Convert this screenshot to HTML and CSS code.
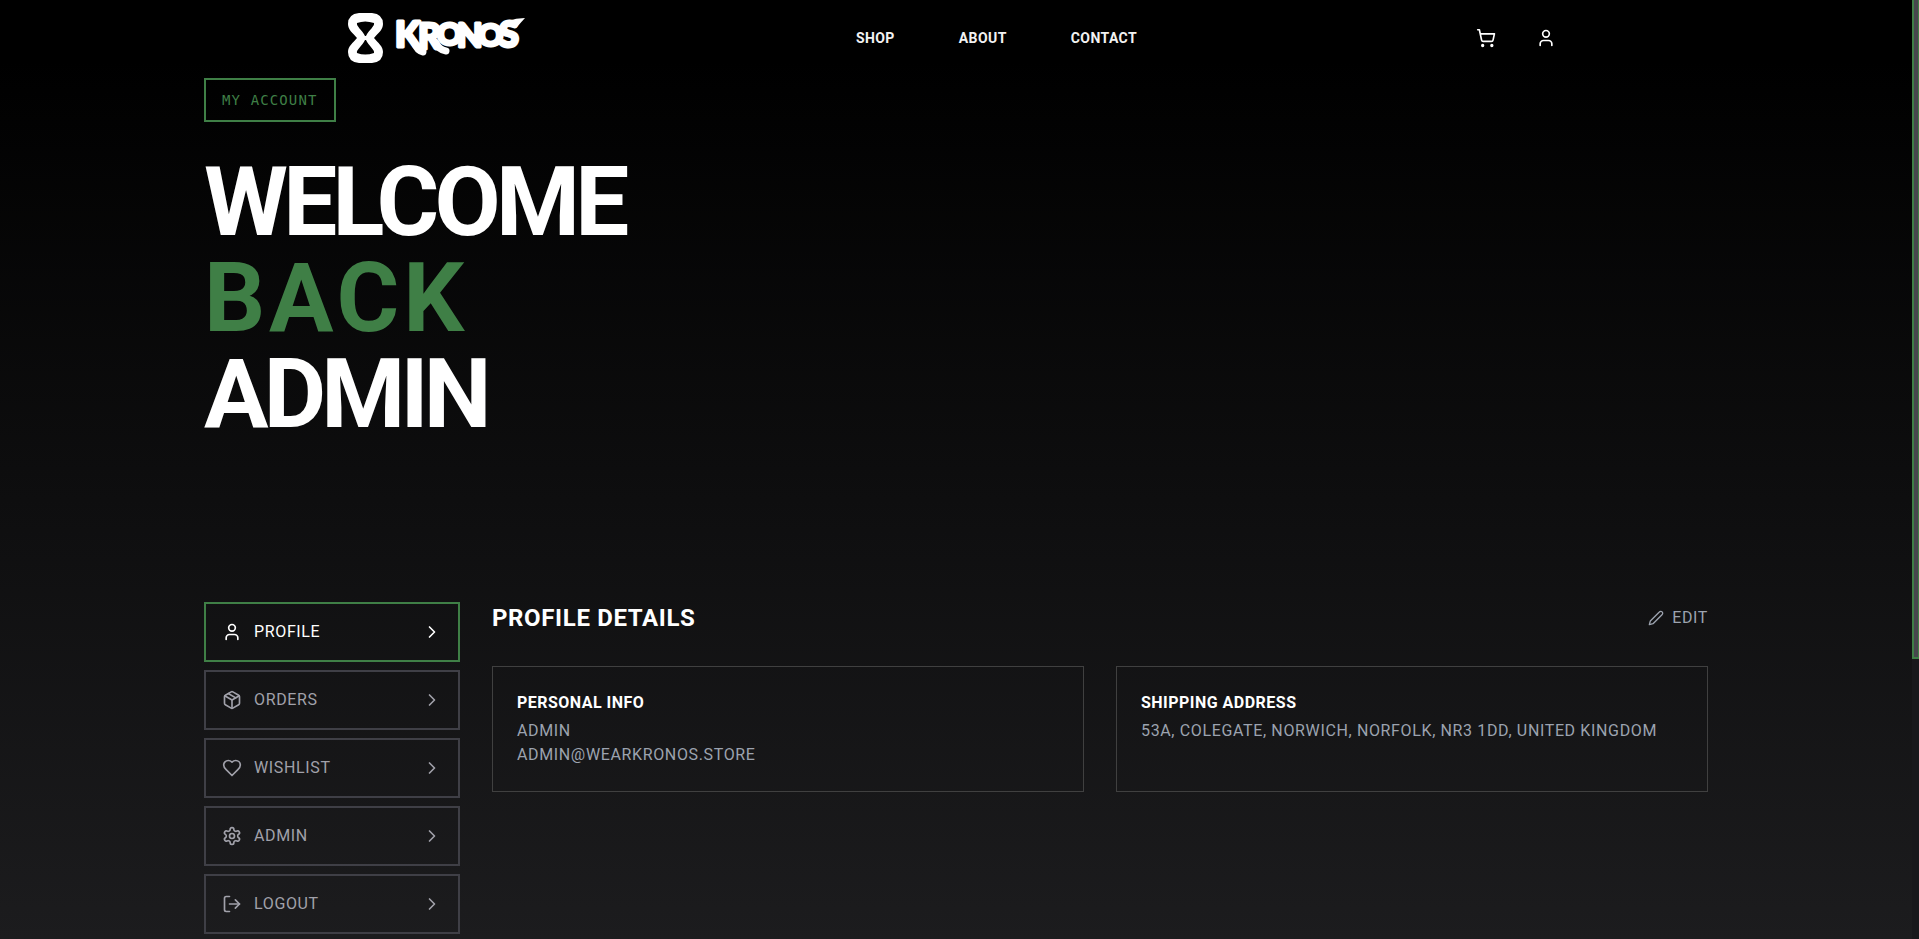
FILE: index.html
```html
<!DOCTYPE html>
<html lang="en">
<head>
<meta charset="utf-8">
<title>Kronos | My Account</title>
<link rel="stylesheet" href="styles.css">
</head>
<body>
<svg class="sprite" aria-hidden="true">
  <symbol id="cart" viewBox="0 0 24 24"><circle cx="8" cy="21" r="1"/><circle cx="19" cy="21" r="1"/><path d="M2.05 2.05h2l2.66 12.42a2 2 0 0 0 2 1.58h9.78a2 2 0 0 0 1.95-1.57l1.65-7.43H5.12"/></symbol>
  <symbol id="user" viewBox="0 0 24 24"><path d="M19 21v-2a4 4 0 0 0-4-4H9a4 4 0 0 0-4 4v2"/><circle cx="12" cy="7" r="4"/></symbol>
  <symbol id="package" viewBox="0 0 24 24"><path d="m7.5 4.27 9 5.15"/><path d="M21 8a2 2 0 0 0-1-1.73l-7-4a2 2 0 0 0-2 0l-7 4A2 2 0 0 0 3 8v8a2 2 0 0 0 1 1.73l7 4a2 2 0 0 0 2 0l7-4A2 2 0 0 0 21 16Z"/><path d="m3.3 7 8.7 5 8.7-5"/><path d="M12 22V12"/></symbol>
  <symbol id="heart" viewBox="0 0 24 24"><path d="M19 14c1.49-1.46 3-3.21 3-5.5A5.5 5.5 0 0 0 16.5 3c-1.76 0-3 .5-4.5 2-1.5-1.5-2.74-2-4.5-2A5.5 5.5 0 0 0 2 8.5c0 2.3 1.5 4.05 3 5.5l7 7Z"/></symbol>
  <symbol id="gear" viewBox="0 0 24 24"><path d="M12.22 2h-.44a2 2 0 0 0-2 2v.18a2 2 0 0 1-1 1.73l-.43.25a2 2 0 0 1-2 0l-.15-.08a2 2 0 0 0-2.73.73l-.22.38a2 2 0 0 0 .73 2.73l.15.1a2 2 0 0 1 1 1.72v.51a2 2 0 0 1-1 1.74l-.15.09a2 2 0 0 0-.73 2.73l.22.38a2 2 0 0 0 2.73.73l.15-.08a2 2 0 0 1 2 0l.43.25a2 2 0 0 1 1 1.73V20a2 2 0 0 0 2 2h.44a2 2 0 0 0 2-2v-.18a2 2 0 0 1 1-1.73l.43-.25a2 2 0 0 1 2 0l.15.08a2 2 0 0 0 2.73-.73l.22-.39a2 2 0 0 0-.73-2.73l-.15-.08a2 2 0 0 1-1-1.74v-.5a2 2 0 0 1 1-1.74l.15-.09a2 2 0 0 0 .73-2.73l-.22-.38a2 2 0 0 0-2.73-.73l-.15.08a2 2 0 0 1-2 0l-.43-.25a2 2 0 0 1-1-1.73V4a2 2 0 0 0-2-2z"/><circle cx="12" cy="12" r="3"/></symbol>
  <symbol id="logout" viewBox="0 0 24 24"><path d="M9 21H5a2 2 0 0 1-2-2V5a2 2 0 0 1 2-2h4"/><path d="m16 17 5-5-5-5"/><path d="M21 12H9"/></symbol>
  <symbol id="chevron" viewBox="0 0 24 24"><path d="m9 18 6-6-6-6"/></symbol>
  <symbol id="pencil" viewBox="0 0 24 24"><path d="M17 3a2.85 2.83 0 1 1 4 4L7.5 20.5 2 22l1.5-5.5Z"/></symbol>
</svg>

<header class="topbar">
  <a class="logo" href="#" aria-label="Kronos home">
    <svg width="177" height="52" viewBox="0 0 177 52">
      <path fill="#fff" fill-rule="evenodd" d="M11 1H24Q35 2 35 12C35 18 30 21 26 26C30 31 35 34 35 40Q35 50 24 51H11Q0 50 0 40C0 34 5 31 9 26C5 21 0 18 0 12Q0 2 11 1ZM9 11C8 14 14 18 17 24H18C21 18 27 14 26 11Q17 8 9 11ZM9 41C8 38 14 34 17 28H18C21 34 27 38 26 41Q17 44 9 41Z"/>
      <text class="wordmark"><tspan x="47" y="35" font-size="36">K</tspan><tspan x="70" y="37" font-size="36">R</tspan><tspan x="89" y="33" font-size="31">O</tspan><tspan x="109" y="35" font-size="33">N</tspan><tspan x="130" y="34" font-size="31">O</tspan><tspan x="151" y="35" font-size="36">S</tspan></text>
      <g class="drips"><path d="M66 30Q69 39 75 40"/><path d="M88 31Q91 38 98 39"/></g>
      <path fill="#fff" d="M160 9Q168 6 177 6L168 16L160 15Z"/>
    </svg>
  </a>
  <nav class="links">
    <a href="#">SHOP</a>
    <a href="#">ABOUT</a>
    <a href="#">CONTACT</a>
  </nav>
  <div class="actions">
    <button class="icon-btn" aria-label="Cart"><svg class="icon"><use href="#cart"/></svg></button>
    <button class="icon-btn" aria-label="Account"><svg class="icon"><use href="#user"/></svg></button>
  </div>
</header>

<main class="page">
  <section class="hero">
    <span class="badge">MY ACCOUNT</span>
    <h1 class="title">WELCOME<span class="accent">BACK</span>ADMIN</h1>
  </section>

  <div class="account">
    <nav class="menu">
      <button class="item active"><svg class="icon"><use href="#user"/></svg><span class="label">PROFILE</span><svg class="icon"><use href="#chevron"/></svg></button>
      <button class="item"><svg class="icon"><use href="#package"/></svg><span class="label">ORDERS</span><svg class="icon"><use href="#chevron"/></svg></button>
      <button class="item"><svg class="icon"><use href="#heart"/></svg><span class="label">WISHLIST</span><svg class="icon"><use href="#chevron"/></svg></button>
      <button class="item"><svg class="icon"><use href="#gear"/></svg><span class="label">ADMIN</span><svg class="icon"><use href="#chevron"/></svg></button>
      <button class="item"><svg class="icon"><use href="#logout"/></svg><span class="label">LOGOUT</span><svg class="icon"><use href="#chevron"/></svg></button>
    </nav>

    <section class="details">
      <div class="details-head">
        <h2>PROFILE DETAILS</h2>
        <button class="edit"><svg class="icon small"><use href="#pencil"/></svg>EDIT</button>
      </div>
      <div class="cards">
        <article class="card">
          <h3>PERSONAL INFO</h3>
          <p>ADMIN</p>
          <p>ADMIN@WEARKRONOS.STORE</p>
        </article>
        <article class="card">
          <h3>SHIPPING ADDRESS</h3>
          <p>53A, COLEGATE, NORWICH, NORFOLK, NR3 1DD, UNITED KINGDOM</p>
        </article>
      </div>
    </section>
  </div>
</main>

<div class="scroll-track" aria-hidden="true"><div class="scroll-thumb"></div></div>
</body>
</html>
```
FILE: styles.css
```css
* { box-sizing: border-box; }

html { background: #1c1c1e; }

body {
  margin: 0;
  min-height: 100vh;
  padding-right: 7px;
  background: linear-gradient(to bottom, #000 0, #000 60px, #1c1c1e 100%);
  color: #fff;
  font-family: Roboto, "Liberation Sans", sans-serif;
  font-size: 16px;
  line-height: 24px;
  letter-spacing: 0.04em;
}

h1, h2, h3, p { margin: 0; }

button {
  padding: 0;
  border: 0;
  background: none;
  color: inherit;
  font: inherit;
  letter-spacing: inherit;
  cursor: pointer;
}

.sprite { display: none; }

.icon {
  flex: none;
  width: 20px;
  height: 20px;
  fill: none;
  stroke: currentColor;
  stroke-width: 2;
  stroke-linecap: round;
  stroke-linejoin: round;
}
.icon.small { width: 16px; height: 16px; }

.topbar {
  display: flex;
  align-items: center;
  justify-content: space-between;
  max-width: 1280px;
  margin: 0 auto;
  padding: 12px 32px;
}

.logo, .logo svg { display: block; }

.wordmark {
  fill: #fff;
  stroke: #fff;
  stroke-width: 3;
  stroke-linejoin: round;
  font-family: Lato, sans-serif;
  font-weight: 900;
  letter-spacing: 0;
}
.drips {
  fill: none;
  stroke: #fff;
  stroke-width: 7;
  stroke-linecap: round;
}

.links { display: flex; gap: 64px; }
.links a {
  color: #f2f2f2;
  font-size: 14px;
  font-weight: 700;
  letter-spacing: 0.03em;
  text-decoration: none;
}

.actions { display: flex; gap: 24px; }
.icon-btn { display: flex; padding: 8px; }

.page {
  max-width: 1536px;
  margin: 0 auto;
  padding: 2px 16px 4px;
}

.hero { padding-bottom: 160px; }

.badge {
  display: block;
  width: fit-content;
  padding: 8px 16px;
  border: 2px solid #3f7f46;
  color: #3f7f46;
  font-family: "DejaVu Sans Mono", monospace;
  font-size: 14px;
  letter-spacing: 0.08em;
}

.title {
  margin-top: 32px;
  font-size: 96px;
  font-weight: 700;
  line-height: 1;
  letter-spacing: -0.05em;
}
.accent {
  display: block;
  color: #3f7f46;
  letter-spacing: 0.04em;
}

.account {
  display: grid;
  grid-template-columns: 256px 1fr;
  gap: 32px;
}

.menu { display: flex; flex-direction: column; gap: 8px; }

.item {
  display: flex;
  align-items: center;
  gap: 12px;
  padding: 16px;
  border: 2px solid #3f3f46;
  color: #a1a1aa;
  text-align: left;
}
.item.active { border-color: #3f7f46; color: #fff; }
.label { flex: 1; }

.details-head {
  display: flex;
  align-items: center;
  justify-content: space-between;
  margin-bottom: 32px;
}
.details-head h2 { font-size: 24px; font-weight: 700; line-height: 32px; }

.edit { display: flex; align-items: center; gap: 8px; color: #9ca3af; }

.cards {
  display: grid;
  grid-template-columns: 1fr 1fr;
  gap: 32px;
}
.card { padding: 24px; border: 1px solid #404040; }
.card h3 { margin-bottom: 4px; font-size: 16px; font-weight: 700; letter-spacing: 0.03em; }
.card p { color: #9ca3af; }

.scroll-track {
  position: fixed;
  top: 0;
  right: -1px;
  bottom: 0;
  width: 8px;
  background: #18181b;
}
.scroll-thumb {
  height: 70.2%;
  border: 2px solid #3f7f46;
  border-top: 0;
  background: #47474d;
}
```
